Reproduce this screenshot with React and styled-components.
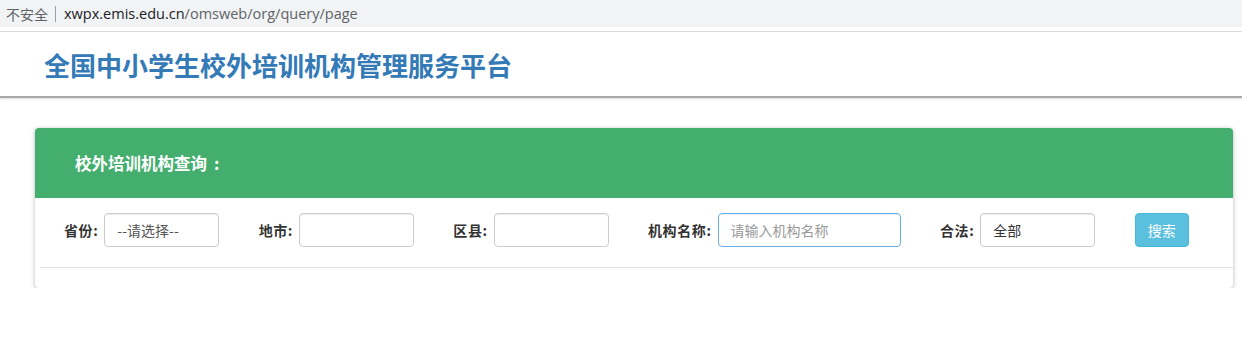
import styled, { createGlobalStyle } from 'styled-components';

const GlobalStyle = createGlobalStyle`
  html, body {
    margin: 0;
    padding: 0;
    background: #fff;
    font-family: "Liberation Sans", "Noto Sans CJK SC", sans-serif;
  }
`

const AddressBar = styled.div`
  height: 27px;
  background: #f1f3f4;
  display: flex;
  align-items: center;
  padding-left: 6px;
  font-size: 14px;
  border-bottom: 4px solid #fff;
`

const Insecure = styled.span`
  color: #5f6368;
  font-family: "Noto Sans CJK SC", sans-serif;
  font-size: 14px;
`

const Separator = styled.span`
  width: 1px;
  height: 16px;
  background: #9aa0a6;
  margin: 0 8px 0 7px;
`

const Host = styled.span`
  color: #202124;
  font-family: "Open Sans", "Liberation Sans", sans-serif;
  font-size: 14.5px;
`

const Path = styled(Host)`
  color: #5f6368;
`

const TopLine = styled.div`
  height: 1px;
  background: #dcdcdc;
`

const Header = styled.header`
  height: 64px;
  display: flex;
  align-items: center;
  padding-left: 44px;
  border-bottom: 2px solid #a9a9a9;
  box-shadow: 0 1px 2px rgba(0, 0, 0, 0.15);
`

const Title = styled.h1`
  margin: 0;
  font-family: "Noto Sans CJK SC", sans-serif;
  font-size: 26px;
  font-weight: 700;
  color: #337ab7;
`

const Page = styled.main`
  padding: 30px 9px 0 35px;
`

const Panel = styled.section`
  background: #fff;
  border-radius: 4px;
  box-shadow: 0 1px 4px rgba(0, 0, 0, 0.3);
  overflow: hidden;
`

const PanelHeading = styled.div`
  height: 70px;
  background: #44ae6e;
  display: flex;
  align-items: center;
  padding-left: 40px;
  color: #fff;
  font-family: "Noto Sans CJK SC", sans-serif;
  font-size: 16.5px;
  font-weight: 700;
`

const Colon = styled.span`
  padding-left: 7px;
`

const PanelBody = styled.div`
  padding: 15px 0 20px 15px;
`

const Row = styled.div`
  display: grid;
  grid-template-columns: 2fr 2fr 2fr 3fr 2fr 1fr;
  margin-right: 15px;
`

const Field = styled.div`
  display: flex;
  align-items: center;
  padding-left: 14px;
`

const Label = styled.label`
  font-family: "Noto Sans CJK SC", sans-serif;
  font-size: 14px;
  font-weight: 700;
  letter-spacing: 0.6px;
  color: #333;
  margin-right: 6px;
`

const Input = styled.input`
  box-sizing: border-box;
  width: ${p => p.$w || 115}px;
  height: 34px;
  padding: 6px 12px;
  font-family: "Noto Sans CJK SC", sans-serif;
  font-size: 14px;
  color: ${p => p.$dark ? '#333' : '#555'};
  border: 1px solid ${p => (p.$focus ? '#66afe9' : '#ccc')};
  border-radius: 4px;
  box-shadow: inset 0 1px 1px rgba(0, 0, 0, 0.075);
  outline: none;
  &::placeholder {
    color: #999;
  }
`

const SearchButton = styled.button`
  box-sizing: border-box;
  width: 54px;
  height: 34px;
  background: #5bc0de;
  border: 1px solid #46b8da;
  border-radius: 4px;
  color: #fff;
  font-family: "Noto Sans CJK SC", sans-serif;
  font-size: 14px;
  padding: 0;
`

const Divider = styled.div`
  height: 1px;
  background: #e3e3e3;
  margin: 20px 0 0 -10px;
`

const App = () => {
  return (
    <>
      <GlobalStyle />
      <AddressBar>
        <Insecure>不安全</Insecure>
        <Separator />
        <Host>xwpx.emis.edu.cn</Host>
        <Path>/omsweb/org/query/page</Path>
      </AddressBar>
      <TopLine />
      <Header>
        <Title>全国中小学生校外培训机构管理服务平台</Title>
      </Header>
      <Page>
        <Panel>
          <PanelHeading>校外培训机构查询<Colon>:</Colon></PanelHeading>
          <PanelBody>
            <Row>
              <Field>
                <Label>省份:</Label>
                <Input readOnly value="--请选择--" />
              </Field>
              <Field>
                <Label>地市:</Label>
                <Input readOnly value="" />
              </Field>
              <Field>
                <Label>区县:</Label>
                <Input readOnly value="" />
              </Field>
              <Field>
                <Label>机构名称:</Label>
                <Input $w={183} $focus placeholder="请输入机构名称" />
              </Field>
              <Field>
                <Label>合法:</Label>
                <Input $dark readOnly value="全部" />
              </Field>
              <Field>
                <SearchButton>搜索</SearchButton>
              </Field>
            </Row>
            <Divider />
          </PanelBody>
        </Panel>
      </Page>
    </>
  );
}

export default App;
